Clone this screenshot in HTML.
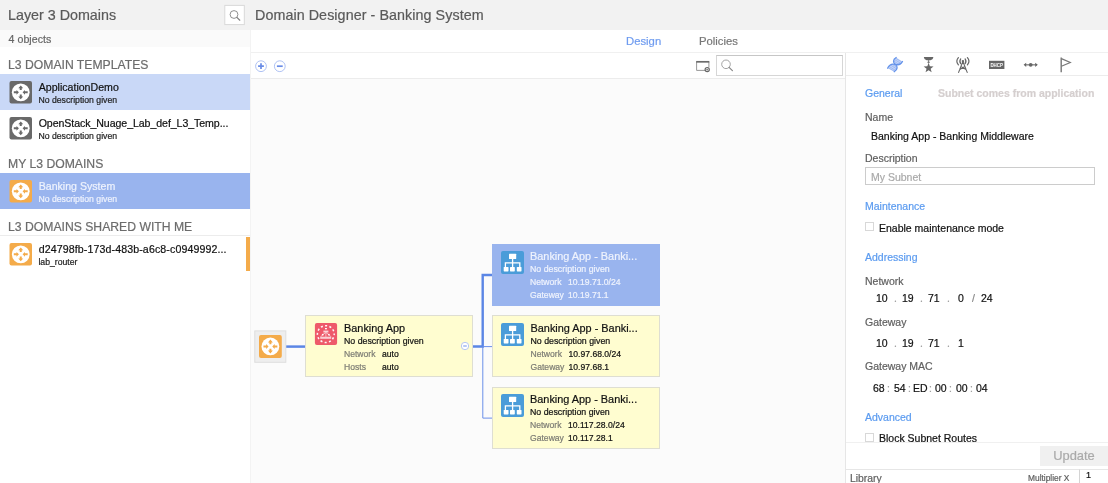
<!DOCTYPE html>
<html>
<head>
<meta charset="utf-8">
<title>Domain Designer - Banking System</title>
<style>
*{box-sizing:border-box;margin:0;padding:0}
html,body{width:1108px;height:483px;overflow:hidden;background:#fff;font-family:"Liberation Sans",sans-serif;color:#333}
.abs{position:absolute}
body{will-change:transform;-webkit-text-stroke:0.2px}
#hdr{left:0;top:0;width:1108px;height:30px;background:#f2f2f2}
#hdr .t1{left:8px;top:5px;font-size:14.3px;color:#5a5a5a;line-height:20px;white-space:nowrap}
#hdr .t2{left:255px;top:5px;font-size:14.3px;letter-spacing:0.07px;color:#5a5a5a;line-height:20px;white-space:nowrap}
#sbtn{left:225px;top:5px;width:20px;height:20px;border:1px solid #d9d9d9;background:#fff}
/* left panel */
#left{left:0;top:30px;width:250px;height:453px;background:#fff}
#left .cnt{left:0;top:0;width:250px;height:17px;background:#fafafa;font-size:10.6px;color:#666;line-height:18px;padding-left:8.5px;letter-spacing:0.06px;overflow:hidden}
.sec{left:0;width:250px;height:27px;font-size:12.2px;color:#6c6c6c;line-height:36px;padding-left:8px;white-space:nowrap}
.row{left:0;width:250px;height:36px}
.row .ic{left:9px;top:7px}
.row .n{left:38.7px;top:6px;font-size:10.6px;line-height:14px;color:#111;white-space:nowrap}
.row .d{left:38.4px;top:20px;font-size:8.7px;line-height:12px;color:#222;white-space:nowrap}
/* main */
#tabs{left:251px;top:30px;width:857px;height:23px;background:#fff;border-bottom:1px solid #f0f0f0}
#tabs span{position:absolute;top:4px;font-size:11.3px;line-height:15px}
#tool{left:251px;top:53px;width:595px;height:26px;background:#fff;border-bottom:1px solid #ececec}
#canvas{left:251px;top:79px;width:595px;height:404px;background:#fbfbfb}
#vline{left:250px;top:30px;width:1px;height:453px;background:#f3f3f3}
/* right */
#right{left:845px;top:53px;width:263px;height:430px;background:#fff;border-left:1px solid #e6e6e6}
#ricons{left:0;top:0;width:262px;height:23px;border-bottom:1px solid #ececec}
.lbl{font-size:10.5px;color:#606060;line-height:14px;white-space:nowrap}
.blue{font-size:10.5px;color:#5b9bf0;line-height:14px;white-space:nowrap}
.val{font-size:10.5px;color:#111;line-height:14px;white-space:nowrap}
.cb{width:9px;height:9px;border:1px solid #d8d8d8;background:#fff}
.ip span,.ip i{position:absolute;top:0;font-style:normal}
.ip i{color:#a0a0a0}
.ip{left:0;width:200px;height:14px}
.node{background:#fffdd0;border:1px solid #deded2}
.node .tt{font-size:10.9px;line-height:14px;color:#111;white-space:nowrap}
.node .dd{font-size:8.6px;line-height:11px;color:#111;white-space:nowrap}
.node .kk{font-size:8.6px;line-height:11px;color:#7c7c74;white-space:nowrap}
.sic{left:8px;top:6px;width:23px;height:23px}
.node.sel{background:#99b4ee;border-color:#99b4ee}
.node.sel .tt,.node.sel .dd,.node.sel .kk{color:#eff3fd}
</style>
</head>
<body>
<div id="hdr" class="abs">
  <div class="abs t1">Layer 3 Domains</div>
  <svg class="abs" style="left:222px;top:3px" width="26" height="25" viewBox="222 3 26 25">
    <rect x="224.8" y="5.4" width="19.5" height="19.2" fill="#fff" stroke="#d9d9d9" stroke-width="1"/>
    <circle cx="234" cy="14.5" r="3.9" fill="none" stroke="#8a8a8a" stroke-width="0.95"/><path d="M236.9 17.4 L239.8 20.2" stroke="#808080" stroke-width="1.2" stroke-linecap="round"/>
  </svg>
  <div class="abs t2">Domain Designer - Banking System</div>
</div>

<div id="left" class="abs">
  <div class="abs cnt">4 objects</div>
  <div class="abs sec" style="top:17px">L3 DOMAIN TEMPLATES</div>
  <div class="abs row" style="top:44px;background:#c9d8f7">
    <svg class="abs ic" width="24" height="24" viewBox="0 0 24 24"><rect x="0.5" y="0.1" width="22.5" height="22.4" rx="2" fill="#696969"/><g transform="translate(0.5,0.1)" fill="#696969"><circle cx="11.25" cy="11.25" r="8.9" fill="#fff" stroke="none"/>
      <path d="M11.25 4.3 L13.7 7.2 L12.25 7.2 L12.25 9 L10.25 9 L10.25 7.2 L8.8 7.2 Z"/>
      <path d="M11.25 18.2 L13.7 15.3 L12.25 15.3 L12.25 13.5 L10.25 13.5 L10.25 15.3 L8.8 15.3 Z"/>
      <path d="M9.4 11.25 L7 8.8 L7 10.25 L4.3 10.25 L4.3 12.25 L7 12.25 L7 13.7 Z"/>
      <path d="M13.1 11.25 L15.5 8.8 L15.5 10.25 L18.2 10.25 L18.2 12.25 L15.5 12.25 L15.5 13.7 Z"/></g></svg>
    <div class="abs n">ApplicationDemo</div><div class="abs d">No description given</div>
  </div>
  <div class="abs row" style="top:80px">
    <svg class="abs ic" width="24" height="24" viewBox="0 0 24 24"><rect x="0.5" y="0.1" width="22.5" height="22.4" rx="2" fill="#696969"/><g transform="translate(0.5,0.1)" fill="#696969"><circle cx="11.25" cy="11.25" r="8.9" fill="#fff" stroke="none"/>
      <path d="M11.25 4.3 L13.7 7.2 L12.25 7.2 L12.25 9 L10.25 9 L10.25 7.2 L8.8 7.2 Z"/>
      <path d="M11.25 18.2 L13.7 15.3 L12.25 15.3 L12.25 13.5 L10.25 13.5 L10.25 15.3 L8.8 15.3 Z"/>
      <path d="M9.4 11.25 L7 8.8 L7 10.25 L4.3 10.25 L4.3 12.25 L7 12.25 L7 13.7 Z"/>
      <path d="M13.1 11.25 L15.5 8.8 L15.5 10.25 L18.2 10.25 L18.2 12.25 L15.5 12.25 L15.5 13.7 Z"/></g></svg>
    <div class="abs n" style="letter-spacing:-0.07px">OpenStack_Nuage_Lab_def_L3_Temp...</div><div class="abs d">No description given</div>
  </div>
  <div class="abs sec" style="top:116px">MY L3 DOMAINS</div>
  <div class="abs row" style="top:143px;background:#99b4ee">
    <svg class="abs ic" width="24" height="24" viewBox="0 0 24 24"><rect x="0.5" y="0.1" width="22.5" height="22.4" rx="2" fill="#f4ab4a"/><g transform="translate(0.5,0.1)" fill="#f4ab4a"><circle cx="11.25" cy="11.25" r="8.9" fill="#fff" stroke="none"/>
      <path d="M11.25 4.3 L13.7 7.2 L12.25 7.2 L12.25 9 L10.25 9 L10.25 7.2 L8.8 7.2 Z"/>
      <path d="M11.25 18.2 L13.7 15.3 L12.25 15.3 L12.25 13.5 L10.25 13.5 L10.25 15.3 L8.8 15.3 Z"/>
      <path d="M9.4 11.25 L7 8.8 L7 10.25 L4.3 10.25 L4.3 12.25 L7 12.25 L7 13.7 Z"/>
      <path d="M13.1 11.25 L15.5 8.8 L15.5 10.25 L18.2 10.25 L18.2 12.25 L15.5 12.25 L15.5 13.7 Z"/></g></svg>
    <div class="abs n" style="color:#eff3fd">Banking System</div><div class="abs d" style="color:#eff3fd">No description given</div>
  </div>
  <div class="abs sec" style="top:179px">L3 DOMAINS SHARED WITH ME</div>
  <div class="abs" style="left:0;top:205px;width:250px;height:1px;background:#ececec"></div>
  <div class="abs row" style="top:206px">
    <svg class="abs ic" width="24" height="24" viewBox="0 0 24 24"><rect x="0.5" y="0.1" width="22.5" height="22.4" rx="2" fill="#f4ab4a"/><g transform="translate(0.5,0.1)" fill="#f4ab4a"><circle cx="11.25" cy="11.25" r="8.9" fill="#fff" stroke="none"/>
      <path d="M11.25 4.3 L13.7 7.2 L12.25 7.2 L12.25 9 L10.25 9 L10.25 7.2 L8.8 7.2 Z"/>
      <path d="M11.25 18.2 L13.7 15.3 L12.25 15.3 L12.25 13.5 L10.25 13.5 L10.25 15.3 L8.8 15.3 Z"/>
      <path d="M9.4 11.25 L7 8.8 L7 10.25 L4.3 10.25 L4.3 12.25 L7 12.25 L7 13.7 Z"/>
      <path d="M13.1 11.25 L15.5 8.8 L15.5 10.25 L18.2 10.25 L18.2 12.25 L15.5 12.25 L15.5 13.7 Z"/></g></svg>
    <div class="abs n" style="letter-spacing:0.12px">d24798fb-173d-483b-a6c8-c0949992...</div><div class="abs d">lab_router</div>
    <div class="abs" style="left:246px;top:1px;width:4px;height:34px;background:#f4ab4a"></div>
  </div>
</div>
<div id="vline" class="abs"></div>



<div id="tabs" class="abs">
  <span style="left:375px;color:#6f9cf0">Design</span>
  <span style="left:448px;color:#777">Policies</span>
</div>
<div id="tool" class="abs">
  <svg class="abs" style="left:3px;top:5px" width="40" height="16" viewBox="0 -1.2 40 16">
    <circle cx="7" cy="7" r="5.4" fill="#fff" stroke="#a6bbf2" stroke-width="0.9"/><path d="M4.1 7 H9.9 M7 4.1 V9.9" stroke="#6a8ce6" stroke-width="1.7"/>
    <circle cx="25.8" cy="7" r="5.4" fill="#fff" stroke="#a6bbf2" stroke-width="0.9"/><path d="M22.9 7 H28.7" stroke="#6a8ce6" stroke-width="1.7"/>
  </svg>
  <svg class="abs" style="left:444px;top:7px" width="16" height="13" viewBox="0 0 16 13">
    <path d="M1.6 1.6 V10.4 H10 M13.9 1.6 V7.4" fill="none" stroke="#8c8c8c" stroke-width="0.9"/><path d="M1.2 1.8 H14.3" stroke="#6a6a6a" stroke-width="1.7"/>
    <circle cx="12.2" cy="9.6" r="2.1" fill="#fff" stroke="#666" stroke-width="1.2"/><path d="M11.2 9.6 H13.2 M12.2 8.6 V10.6" stroke="#666" stroke-width="0.7"/>
  </svg>
  <div class="abs" style="left:465px;top:2px;width:127px;height:21px;border:1px solid #d6d6d6;border-top-color:#c6c6c6;background:#fff">
    <svg width="18" height="18" viewBox="0 0 18 18" style="position:absolute;left:0.7px;top:0"><circle cx="8" cy="8.3" r="4.3" fill="none" stroke="#999" stroke-width="0.9"/><path d="M11.1 11.4 L14.4 14.6" stroke="#888" stroke-width="1.2" stroke-linecap="round"/></svg>
  </div>
</div>
<div id="canvas" class="abs">
  <svg class="abs" style="left:0;top:0" width="595" height="404" viewBox="251 79 595 404">
    <path d="M286 346.6 H305.5" stroke="#5b86e5" stroke-width="2.5" fill="none"/>
    <rect x="254.8" y="330.9" width="31" height="31.4" fill="#eeeeee" stroke="#dedede" stroke-width="1"/>
    <rect x="259" y="335" width="22.8" height="22.9" rx="2" fill="#f4ab4a"/>
    <g transform="translate(259.15,335.2)" fill="#f4ab4a"><circle cx="11.25" cy="11.25" r="8.9" fill="#fff" stroke="none"/>
      <path d="M11.25 4.3 L13.7 7.2 L12.25 7.2 L12.25 9 L10.25 9 L10.25 7.2 L8.8 7.2 Z"/>
      <path d="M11.25 18.2 L13.7 15.3 L12.25 15.3 L12.25 13.5 L10.25 13.5 L10.25 15.3 L8.8 15.3 Z"/>
      <path d="M9.4 11.25 L7 8.8 L7 10.25 L4.3 10.25 L4.3 12.25 L7 12.25 L7 13.7 Z"/>
      <path d="M13.1 11.25 L15.5 8.8 L15.5 10.25 L18.2 10.25 L18.2 12.25 L15.5 12.25 L15.5 13.7 Z"/></g>
    <path d="M473 346.5 H482.7 V275 H492" stroke="#5b86e5" stroke-width="2.4" fill="none" stroke-linejoin="miter"/>
    <path d="M482.7 346.6 H492 M482.8 346.5 V418.1 H492" stroke="#6a8fe9" stroke-width="1" fill="none"/>
  </svg>
  <div class="abs node" style="left:54px;top:236px;width:168px;height:62px">
    <svg class="abs" style="left:8px;top:7px" width="24" height="24" viewBox="0 0 24 24">
      <rect x="0.9" y="0.1" width="22.2" height="22" rx="2" fill="#ee5a6a"/>
      <g transform="translate(0.9,0.1)">
      <circle cx="10.9" cy="11" r="8.4" fill="none" stroke="#fff" stroke-width="1.5" stroke-dasharray="2.1 2.3" stroke-dashoffset="1" opacity="0.95"/>
      <rect x="10.1" y="4.9" width="1.9" height="1.3" fill="#fff"/>
      <rect x="8.5" y="7.5" width="5" height="1.9" fill="#fff" opacity="0.75"/>
      <path d="M11 9.4 L7.8 11.6 M11 9.4 L14 11.6 M7.8 11.6 L6 13.6 M14 11.6 L16 13.6 M11 10 V13.6" stroke="#fff" stroke-width="0.8" opacity="0.7" fill="none"/>
      <rect x="7" y="10.8" width="1.6" height="1.5" fill="#fff"/>
      <rect x="13.2" y="10.8" width="1.6" height="1.5" fill="#fff"/>
      <rect x="5.3" y="13.6" width="11" height="2.1" fill="#fff" opacity="0.7"/>
      </g>
    </svg>
    <div class="abs tt" style="left:38px;top:5px">Banking App</div>
    <div class="abs dd" style="left:38px;top:20px;font-size:8.8px">No description given</div>
    <div class="abs kk" style="left:38px;top:33px">Network</div><div class="abs dd" style="left:76px;top:33px">auto</div>
    <div class="abs kk" style="left:38px;top:46px">Hosts</div><div class="abs dd" style="left:76px;top:46px">auto</div>
    <svg class="abs" style="left:154px;top:25px" width="10" height="10" viewBox="0 0 10 10"><circle cx="5" cy="5" r="3.7" fill="#fff" stroke="#adc0f2" stroke-width="0.9"/><path d="M3.2 5 H6.8" stroke="#6f93ea" stroke-width="1"/></svg>
  </div>
  <div class="abs node sel" style="left:241px;top:165px;width:167.5px;height:62px">
    <div class="abs sic"><svg width="23" height="23" viewBox="0 0 23 23"><rect x="0" y="0" width="23" height="23" rx="2" fill="#4a9cd9"/>
      <rect x="8" y="2.8" width="7.2" height="5.2" rx="0.5" fill="#fff"/>
      <path d="M11.6 8 V16 M4.4 16 V11.8 H18.8 V16" stroke="#fff" stroke-width="1.3" fill="none"/>
      <rect x="2.7" y="16" width="4.8" height="4.4" rx="0.6" fill="#fff"/>
      <rect x="9" y="16" width="4.8" height="4.4" rx="0.6" fill="#fff"/>
      <rect x="15.8" y="16" width="4.7" height="4.4" rx="0.6" fill="#fff"/></svg></div>
    <div class="abs tt" style="left:37px;top:4px">Banking App - Banki...</div>
    <div class="abs dd" style="left:37px;top:19px;font-size:8.8px">No description given</div>
    <div class="abs kk" style="left:37px;top:32px">Network</div><div class="abs dd" style="left:75px;top:32px">10.19.71.0/24</div>
    <div class="abs kk" style="left:37px;top:45px">Gateway</div><div class="abs dd" style="left:75px;top:45px">10.19.71.1</div>
  </div>
  <div class="abs node" style="left:241px;top:236px;width:167.5px;height:62px">
    <div class="abs sic" style="top:7px"><svg width="23" height="23" viewBox="0 0 23 23"><rect x="0" y="0" width="23" height="23" rx="2" fill="#4a9cd9"/>
      <rect x="8" y="2.8" width="7.2" height="5.2" rx="0.5" fill="#fff"/>
      <path d="M11.6 8 V16 M4.4 16 V11.8 H18.8 V16" stroke="#fff" stroke-width="1.3" fill="none"/>
      <rect x="2.7" y="16" width="4.8" height="4.4" rx="0.6" fill="#fff"/>
      <rect x="9" y="16" width="4.8" height="4.4" rx="0.6" fill="#fff"/>
      <rect x="15.8" y="16" width="4.7" height="4.4" rx="0.6" fill="#fff"/></svg></div>
    <div class="abs tt" style="left:37.5px;top:5px">Banking App - Banki...</div>
    <div class="abs dd" style="left:37.5px;top:20px;font-size:8.8px">No description given</div>
    <div class="abs kk" style="left:37.5px;top:33px">Network</div><div class="abs dd" style="left:75.5px;top:33px">10.97.68.0/24</div>
    <div class="abs kk" style="left:37.5px;top:46px">Gateway</div><div class="abs dd" style="left:75.5px;top:46px">10.97.68.1</div>
  </div>
  <div class="abs node" style="left:241px;top:308px;width:167.5px;height:62px">
    <div class="abs sic"><svg width="23" height="23" viewBox="0 0 23 23"><rect x="0" y="0" width="23" height="23" rx="2" fill="#4a9cd9"/>
      <rect x="8" y="2.8" width="7.2" height="5.2" rx="0.5" fill="#fff"/>
      <path d="M11.6 8 V16 M4.4 16 V11.8 H18.8 V16" stroke="#fff" stroke-width="1.3" fill="none"/>
      <rect x="2.7" y="16" width="4.8" height="4.4" rx="0.6" fill="#fff"/>
      <rect x="9" y="16" width="4.8" height="4.4" rx="0.6" fill="#fff"/>
      <rect x="15.8" y="16" width="4.7" height="4.4" rx="0.6" fill="#fff"/></svg></div>
    <div class="abs tt" style="left:37px;top:4px">Banking App - Banki...</div>
    <div class="abs dd" style="left:37px;top:19px;font-size:8.8px">No description given</div>
    <div class="abs kk" style="left:37px;top:32px">Network</div><div class="abs dd" style="left:75px;top:32px">10.117.28.0/24</div>
    <div class="abs kk" style="left:37px;top:45px">Gateway</div><div class="abs dd" style="left:75px;top:45px">10.117.28.1</div>
  </div>
</div>

<div id="right" class="abs">
  <div id="ricons" class="abs">
    <svg class="abs" style="left:0;top:0" width="262" height="23" viewBox="846 53 262 23"><path d="M896.2 57.5 C892.5 59.5 893 63 895.4 64.5 C897.5 65 900.5 65.5 902.5 61.5 Z" fill="#c4d5f8"/><path d="M895.4 64.5 C897.8 66 898 69.5 894.2 71.8 L887.6 68.2 C889.5 64 893.3 63.8 895.4 64.4 Z" fill="#c4d5f8"/><path d="M894.6 59.6 L900.6 63.2 M895.9 58.4 L901.6 61.9 M894 61.2 L899 64.4 M889 66.3 L895.3 70.3 M890.3 64.9 L896.6 68.9 M888.3 67.7 L894.5 71.3 M892.3 64.3 L897 67.3" stroke="#8eaef0" stroke-width="0.7" fill="none"/><path d="M896.2 57.5 C892.5 59.5 893 63 895.4 64.5 S898 69.5 894.2 71.8" stroke="#6493ea" stroke-width="1.25" fill="none" stroke-linecap="round"/><path d="M902.5 61.5 C900.5 65.5 897.5 65 895.4 64.4 S889.5 64 887.6 68.2" stroke="#6493ea" stroke-width="1.25" fill="none" stroke-linecap="round"/><path d="M923.9 57.1 H933.3 C933.3 59.6 931 60.4 928.6 60.4 C926.2 60.4 923.9 59.6 923.9 57.1 Z" fill="#666"/><rect x="928.1" y="60.2" width="1" height="3" fill="#777"/><rect x="927.3" y="61.8" width="2.6" height="0.9" fill="#777"/><polygon points="928.60,62.80 929.86,66.26 933.55,66.39 930.64,68.66 931.66,72.21 928.60,70.15 925.54,72.21 926.56,68.66 923.65,66.39 927.34,66.26" fill="#666"/><circle cx="962.9" cy="61.1" r="1.2" fill="#666"/><path d="M962.9 61.5 L958.6 72.4 M962.9 61.5 L967.2 72.4 M960.9 66.5 L966 69.5 M964.9 66.5 L959.8 69.5" stroke="#666" stroke-width="1.1" fill="none" stroke-linecap="round"/><path d="M960.7 58.9 Q959 61.3 960.7 63.7 M965.1 58.9 Q966.8 61.3 965.1 63.7 M958.4 57.7 Q955.2 61.3 958.4 64.9 M967.4 57.7 Q970.6 61.3 967.4 64.9" stroke="#666" stroke-width="1.25" fill="none" stroke-linecap="round"/><rect x="989" y="60.8" width="15.4" height="8.2" fill="#666"/><text x="996.7" y="66.9" font-family="Liberation Sans, sans-serif" font-weight="bold" font-size="5.4" fill="#fff" text-anchor="middle" textLength="12.6" lengthAdjust="spacingAndGlyphs">DHCP</text><path d="M1025 64.85 H1036.5" stroke="#666" stroke-width="1.1"/><circle cx="1030.7" cy="64.85" r="1.9" fill="#666"/><path d="M1023.6 64.85 L1026.2 62.8 V66.9 Z M1037.8 64.85 L1035.2 62.8 V66.9 Z" fill="#666"/><path d="M1061.2 57.6 V72.2" stroke="#777" stroke-width="1.4" fill="none"/><path d="M1061.4 58.6 L1070.3 62.5 L1061.4 66.3" stroke="#777" stroke-width="1.2" fill="none" stroke-linejoin="miter"/></svg>
  </div>
  <!-- coordinates inside #right are page-x minus 846, page-y minus 53 -->
  <div class="abs blue" style="left:19px;top:33px">General</div>
  <div class="abs" style="left:92px;top:33px;font-size:10.5px;line-height:14px;font-weight:bold;color:#d5cfcf;white-space:nowrap">Subnet comes from application</div>
  <div class="abs lbl" style="left:19px;top:57px">Name</div>
  <div class="abs val" style="left:25px;top:76px">Banking App - Banking Middleware</div>
  <div class="abs lbl" style="left:19px;top:98px">Description</div>
  <div class="abs" style="left:19px;top:114px;width:230px;height:18px;border:1px solid #ccc;background:#fff"></div>
  <div class="abs" style="left:25px;top:117px;font-size:10.5px;line-height:14px;color:#aaa;white-space:nowrap">My Subnet</div>
  <div class="abs blue" style="left:19px;top:146px">Maintenance</div>
  <div class="abs cb" style="left:19px;top:169px"></div>
  <div class="abs val" style="left:33px;top:168px">Enable maintenance mode</div>
  <div class="abs blue" style="left:19px;top:197px">Addressing</div>
  <div class="abs lbl" style="left:19px;top:221px">Network</div>
  <div class="abs val ip" style="top:238px"><span style="left:30px">10</span><i style="left:48px">.</i><span style="left:56px">19</span><i style="left:74px">.</i><span style="left:82px">71</span><i style="left:101px">.</i><span style="left:112px">0</span><i style="left:126px;color:#888">/</i><span style="left:135px">24</span></div>
  <div class="abs lbl" style="left:19px;top:262px">Gateway</div>
  <div class="abs val ip" style="top:283px"><span style="left:30px">10</span><i style="left:48px">.</i><span style="left:56px">19</span><i style="left:74px">.</i><span style="left:82px">71</span><i style="left:101px">.</i><span style="left:112px">1</span></div>
  <div class="abs lbl" style="left:19px;top:306px">Gateway MAC</div>
  <div class="abs val ip" style="top:328px"><span style="left:27px">68</span><i style="left:41px">:</i><span style="left:48px">54</span><i style="left:62px">:</i><span style="left:67px">ED</span><i style="left:83px">:</i><span style="left:89px">00</span><i style="left:103px">:</i><span style="left:110px">00</span><i style="left:124px">:</i><span style="left:130px">04</span></div>
  <div class="abs blue" style="left:19px;top:357px">Advanced</div>
  <div class="abs cb" style="left:19px;top:380px"></div>
  <div class="abs val" style="left:33px;top:378px">Block Subnet Routes</div>
  <div class="abs" style="left:0;top:389px;width:262px;height:41px;background:#fff;border-top:1px solid #f0f0f0"></div>
  <div class="abs" style="left:194px;top:393px;width:68px;height:20px;background:#f0f0f0;color:#aaa;font-size:12.9px;line-height:20px;text-align:center">Update</div>
  <div class="abs" style="left:0;top:416px;width:262px;height:14px;background:#fff;border-top:1px solid #e6e6e6"></div>
  <div class="abs lbl" style="left:4px;top:419px;font-size:10.4px">Library</div>
  <div class="abs lbl" style="left:182px;top:418px;font-size:8.4px">Multiplier X</div>
  <div class="abs" style="left:233px;top:416px;width:30px;height:18px;border:1px solid #d4d4d4;border-top-color:#e6e6e6;background:#fff"></div>
  <div class="abs val" style="left:240px;top:415px;font-size:9px">1</div>
</div>
</body>
</html>
